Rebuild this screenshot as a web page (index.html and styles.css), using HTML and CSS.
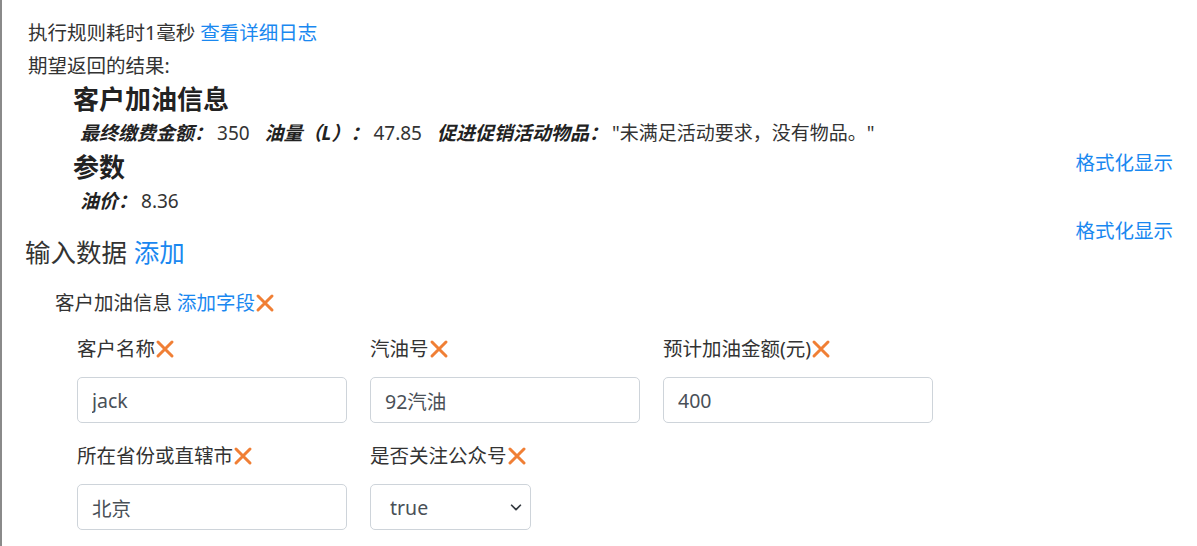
FILE: index.html
```html
<!DOCTYPE html>
<html lang="zh-CN">
<head>
    <meta charset="UTF-8">
    <title>规则测试</title>
    <link rel="stylesheet" href="styles.css">
</head>
<body>
    <div class="page">
        <div class="summary">
            <p class="line">执行规则耗时1毫秒 <a href="#">查看详细日志</a></p>
            <p class="line">期望返回的结果:</p>

            <div class="result">
                <h4>客户加油信息</h4>
                <div class="fields">
                    <span class="key">最终缴费金额：</span><span class="val">350</span>
                    <span class="key">油量（L）：</span><span class="val">47.85</span>
                    <span class="key">促进促销活动物品：</span><span class="val">"未满足活动要求，没有物品。"</span>
                </div>
                <a href="#" class="fmt">格式化显示</a>
            </div>

            <div class="result">
                <h4>参数</h4>
                <div class="fields">
                    <span class="key">油价：</span><span class="val">8.36</span>
                </div>
                <a href="#" class="fmt">格式化显示</a>
            </div>
        </div>

        <h3 class="input-title">输入数据 <a href="#">添加</a></h3>

        <div class="group">
            <div class="group-title">客户加油信息 <a href="#">添加字段</a><span class="del"><svg viewBox="0 0 20 20"><path d="M3 3 L17 17 M17 3 L3 17"/></svg></span></div>

            <div class="form-grid">
                <div class="field">
                    <label>客户名称<span class="del"><svg viewBox="0 0 20 20"><path d="M3 3 L17 17 M17 3 L3 17"/></svg></span></label>
                    <input type="text" value="jack">
                </div>
                <div class="field">
                    <label>汽油号<span class="del"><svg viewBox="0 0 20 20"><path d="M3 3 L17 17 M17 3 L3 17"/></svg></span></label>
                    <input type="text" value="92汽油">
                </div>
                <div class="field">
                    <label>预计加油金额(元)<span class="del"><svg viewBox="0 0 20 20"><path d="M3 3 L17 17 M17 3 L3 17"/></svg></span></label>
                    <input type="text" value="400">
                </div>
                <div class="field">
                    <label>所在省份或直辖市<span class="del"><svg viewBox="0 0 20 20"><path d="M3 3 L17 17 M17 3 L3 17"/></svg></span></label>
                    <input type="text" value="北京">
                </div>
                <div class="field">
                    <label>是否关注公众号<span class="del"><svg viewBox="0 0 20 20"><path d="M3 3 L17 17 M17 3 L3 17"/></svg></span></label>
                    <div class="select">
                        <span>true</span>
                        <svg viewBox="0 0 16 16"><path d="M3 6 L8 11 L13 6"/></svg>
                    </div>
                </div>
            </div>
        </div>
    </div>
</body>
</html>
```

FILE: styles.css
```css
body {
    margin: 0;
    font-family: "Noto Sans", "Noto Sans CJK SC", sans-serif;
    color: #333;
    background: #fff;
}
a {
    color: #1a88f0;
    text-decoration: none;
}
.page {
    border-left: 2px solid #8a8a8a;
    min-height: 546px;
    box-sizing: border-box;
    padding: 16px 24px 0 23px;
}
.summary {
    padding-left: 3px;
}
.line {
    margin: 0;
    font-size: 19.5px;
    line-height: 33px;
}
.result {
    padding-left: 45px;
}
.result h4 {
    margin: 0;
    font-size: 26px;
    font-weight: bold;
    color: #222;
    line-height: 34px;
}
.fields {
    padding-left: 7px;
    font-size: 19px;
    line-height: 34px;
}
.key {
    font-weight: bold;
    font-style: italic;
    color: #222;
    margin-right: 4px;
}
.val {
    margin-right: 10px;
}
.fmt {
    float: right;
    font-size: 19.5px;
    line-height: 26px;
}
.input-title {
    margin: 17px 0 0;
    font-size: 25.5px;
    font-weight: normal;
    line-height: 34px;
}
.group {
    padding: 19px 0 0 30px;
}
.group-title {
    font-size: 19.5px;
    line-height: 30px;
    display: flex;
    align-items: center;
}
.group-title a {
    margin-left: 5px;
}
.del {
    display: inline-flex;
    width: 20px;
    height: 20px;
}
.del svg {
    width: 20px;
    height: 20px;
    fill: none;
    stroke: #f07f35;
    stroke-width: 3;
    stroke-linecap: round;
}
.form-grid {
    display: grid;
    grid-template-columns: repeat(3, 270px);
    column-gap: 23px;
    row-gap: 18px;
    padding: 16px 0 0 22px;
}
.field label {
    display: flex;
    align-items: center;
    font-size: 19.5px;
    line-height: 30px;
    margin-bottom: 13px;
}
.field input {
    box-sizing: border-box;
    width: 270px;
    height: 46px;
    padding: 0 14px;
    border: 1px solid #ced4da;
    border-radius: 5px;
    font-family: "Noto Sans", "Noto Sans CJK SC", sans-serif;
    font-size: 19.5px;
    color: #495057;
    outline: none;
}
.select {
    box-sizing: border-box;
    width: 161px;
    height: 46px;
    padding: 0 7px 0 19px;
    border: 1px solid #ced4da;
    border-radius: 5px;
    display: flex;
    align-items: center;
    justify-content: space-between;
    font-size: 19.5px;
    color: #495057;
}
.select svg {
    width: 14px;
    height: 14px;
    fill: none;
    stroke: #343a40;
    stroke-width: 2;
    stroke-linecap: round;
    stroke-linejoin: round;
}
```
